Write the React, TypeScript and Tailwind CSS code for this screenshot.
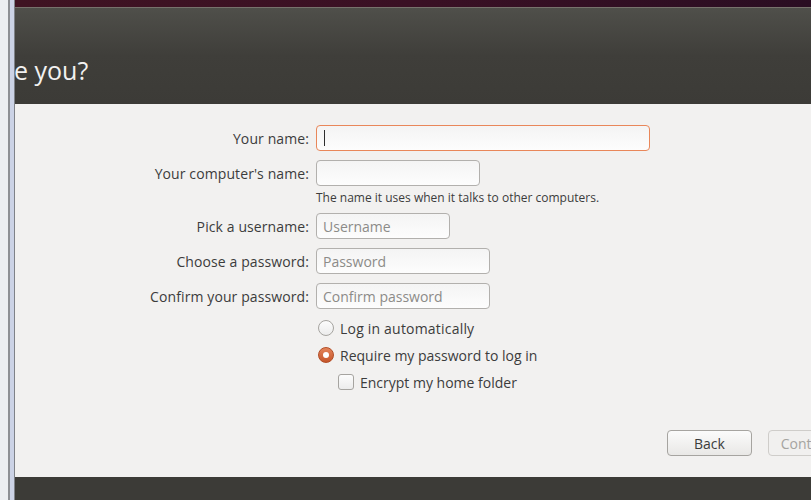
import React from "react";

const font = { fontFamily: '"Open Sans", "Noto Sans", sans-serif' };

const TextField = ({ width, placeholder, focused }: { width: string; placeholder?: string; focused?: boolean }) => (
  <div
    className={`${width} h-[26px] rounded-[4px] border bg-gradient-to-b from-[#f4f4f4] to-[#fdfdfd] flex items-center px-[6px] text-[14px] ${
      focused ? "border-[#e9875a]" : "border-[#b2b0ad]"
    }`}
  >
    {focused && <span className="w-px h-[16px] bg-[#2e2e2e] ml-px" />}
    {placeholder && <span className="text-[#8c8b88]">{placeholder}</span>}
  </div>
);

const Row = ({ label, children }: { label: string; children: React.ReactNode }) => (
  <div className="flex items-center h-[26px]">
    <div className="w-[301px] pr-[7px] text-right text-[14px] text-[#3c3c3c] tracking-[0.1px]">{label}</div>
    {children}
  </div>
);

export default function App() {
  return (
    <div className="w-[811px] h-[500px] overflow-hidden flex bg-[#f2f1f0]" style={font}>
      {/* window edge on the left */}
      <div className="w-[15px] h-full flex shrink-0">
        <div className="w-[8px] bg-[#eceef2]" />
        <div className="w-[2px] bg-[#8d8f95]" />
        <div className="w-[4px] bg-[#ccd3e6]" />
        <div className="w-px bg-[#7f8288]" />
      </div>

      <div className="flex-1 flex flex-col min-w-0">
        <div className="h-[7px] bg-gradient-to-r from-[#3f1322] via-[#3a1024] to-[#2a0d22] shrink-0" />
        <div className="h-px bg-[#77726c] shrink-0" />
        <div className="h-[96px] bg-gradient-to-b from-[#4f4f4a] via-[#3f3e3a] to-[#3c3b37] flex items-end pb-[19px] shrink-0">
          <h1 className="text-[25px] leading-[30px] text-[#f2f1f0] -ml-px">e you?</h1>
        </div>

        <div className="flex-1 flex flex-col pt-[21px]">
          <Row label="Your name:">
            <TextField width="w-[334px]" focused />
          </Row>
          <div className="mt-[9px]">
            <Row label="Your computer's name:">
              <TextField width="w-[164px]" />
            </Row>
          </div>
          <div className="pl-[301px] mt-[4px] text-[12px] leading-[16px] text-[#3c3c3c]">
            The name it uses when it talks to other computers.
          </div>
          <div className="mt-[7px]">
            <Row label="Pick a username:">
              <TextField width="w-[134px]" placeholder="Username" />
            </Row>
          </div>
          <div className="mt-[9px]">
            <Row label="Choose a password:">
              <TextField width="w-[174px]" placeholder="Password" />
            </Row>
          </div>
          <div className="mt-[9px]">
            <Row label="Confirm your password:">
              <TextField width="w-[174px]" placeholder="Confirm password" />
            </Row>
          </div>

          <div className="pl-[303px] mt-[11px] flex flex-col text-[14px] text-[#3c3c3c]">
            <div className="flex items-center h-[16px] gap-[6px]">
              <span className="w-[16px] h-[16px] rounded-full border border-[#a6a4a0] bg-gradient-to-b from-[#fcfcfc] to-[#ececec]" />
              <span className="tracking-[0.2px]">Log in automatically</span>
            </div>
            <div className="flex items-center h-[16px] gap-[6px] mt-[11px]">
              <span className="w-[16px] h-[16px] rounded-full bg-gradient-to-b from-[#e4845a] to-[#c6562a] border border-[#b24d26] flex items-center justify-center">
                <span className="w-[6px] h-[6px] rounded-full bg-white" />
              </span>
              <span>Require my password to log in</span>
            </div>
            <div className="flex items-center h-[16px] gap-[6px] mt-[11px] pl-[20px]">
              <span className="w-[16px] h-[16px] rounded-[3px] border border-[#a6a4a0] bg-gradient-to-b from-[#fcfcfc] to-[#ececec]" />
              <span>Encrypt my home folder</span>
            </div>
          </div>

          <div className="flex-1" />
          <div className="flex justify-end gap-[16px] pb-[21px] -mr-[42px]">
            <button className="w-[85px] h-[26px] rounded-[4px] border border-[#a6a4a0] bg-gradient-to-b from-[#fbfbfb] to-[#e9e8e6] text-[14px] text-[#3c3c3c]">
              Back
            </button>
            <button className="w-[85px] h-[26px] rounded-[4px] border border-[#cfcdca] bg-[#f1f0ef] text-[14px] text-[#a5a4a1]">
              Continue
            </button>
          </div>
        </div>

        <div className="h-[23px] bg-[#3c3b37] shrink-0" />
      </div>
    </div>
  );
}
